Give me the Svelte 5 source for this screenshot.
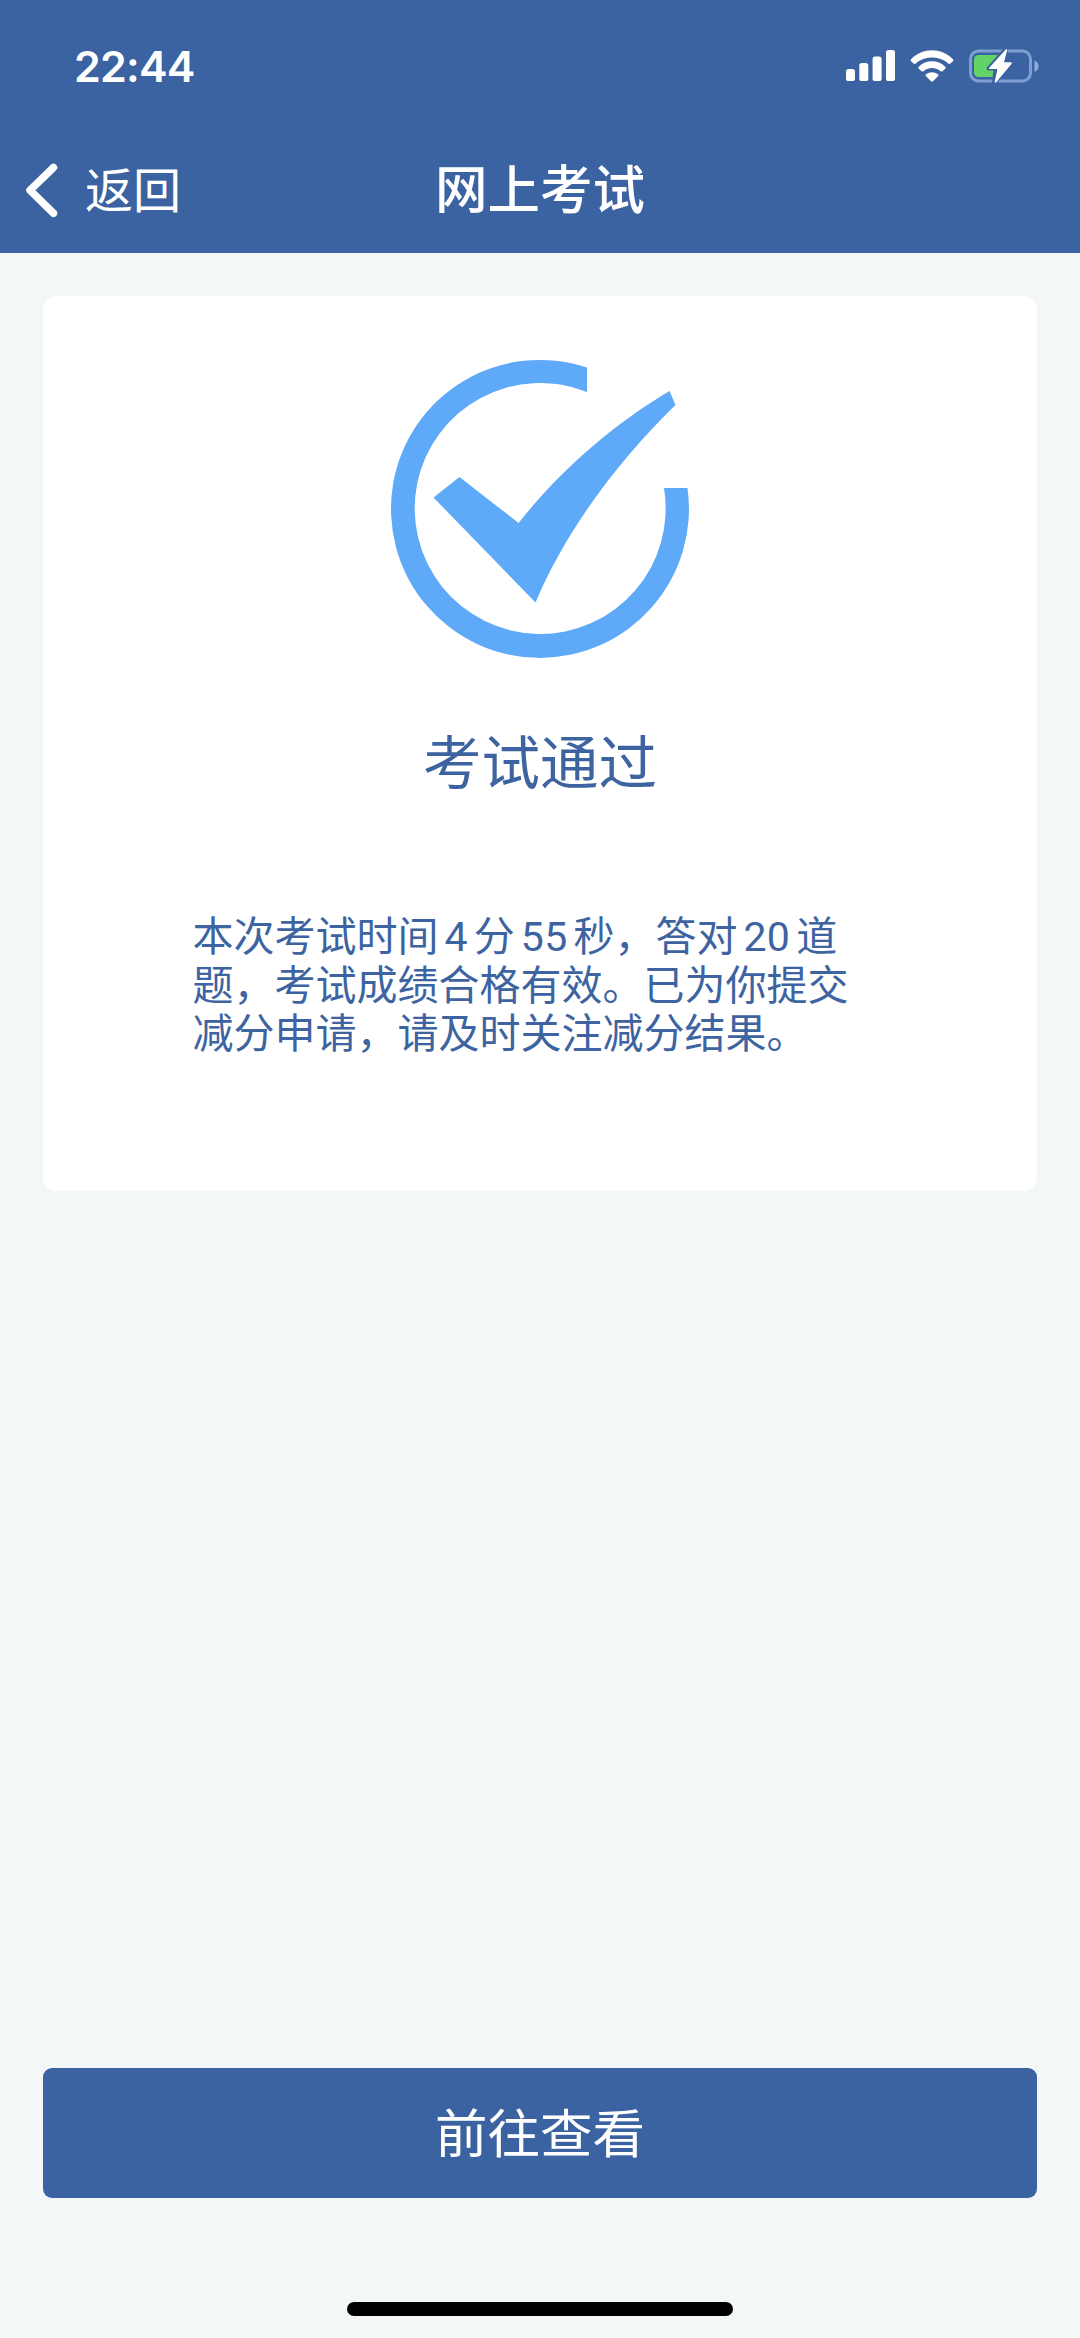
<script>
  const bars = [
    { x: 0, y: 19, h: 12 },
    { x: 13.3, y: 13, h: 18 },
    { x: 26.6, y: 6.5, h: 24.5 },
    { x: 40, y: 0, h: 31 }
  ];
  const resultLines = [
    ['本次考试时间', '4', '分', '55', '秒，答对', '20', '道'],
    ['题，考试成绩合格有效。已为你提交'],
    ['减分申请，请及时关注减分结果。']
  ];
  const isNumber = (part) => /^\d+$/.test(part);
</script>

<div class="screen">
  <header>
    <div class="status">
      <span class="time">22:44</span>
      <div class="indicators">
        <svg class="signal" width="50" height="32" viewBox="0 0 50 32">
          {#each bars as bar}
            <rect x={bar.x} y={bar.y} width="9" height={bar.h} rx="2.6" />
          {/each}
        </svg>
        <svg class="wifi" width="44" height="32" viewBox="0 0 44 32">
          <path d="M1.1 9.2Q.1 10.3 1.1 11.3L3.6 13.6Q4.6 14.5 5.7 13.5C14.8 5.6 29.2 5.6 38.3 13.5Q39.4 14.5 40.4 13.6L42.9 11.3Q43.9 10.3 42.9 9.2C31.2-2.7 12.8-2.7 1.1 9.2Z" />
          <path d="M8.7 16.7Q7.8 17.7 8.8 18.7L11.5 21.2Q12.5 22 13.5 21.2C18.5 17 25.5 17 30.5 21.2Q31.5 22 32.5 21.2L35.2 18.7Q36.2 17.7 35.3 16.7C27.8 9.4 16.2 9.4 8.7 16.7Z" />
          <path d="M16 24.3Q15.1 25.3 16.1 26.3L21 31.2Q22 32.1 23 31.2L27.9 26.3Q28.9 25.3 28 24.3C24.5 21.5 19.5 21.5 16 24.3Z" />
        </svg>
        <svg class="battery" width="70" height="36" viewBox="0 0 70 36">
          <rect x="1.5" y="3" width="60" height="30" rx="8" fill="none" stroke="#7f9fd2" stroke-width="3" />
          <path d="M65.5 12.5V24Q69.5 22 69.5 18.2T65.5 12.5Z" fill="#8fadda" />
          <rect x="5" y="7" width="27" height="22" rx="4.5" fill="#63d267" />
          <path d="M37 .8 19.5 20.5H26.5L25 35.2 43 14.5H34.5Z" fill="#fff" stroke="#3b63a1" stroke-width="4" stroke-linejoin="round" />
          <path d="M36.8 1.5 20 20Q19.5 21 21 21H28.5L25.7 33.8Q26 35.4 27.4 34L42.7 15.7Q43.3 14.3 41.7 14.3H35L38.2 2Q38 .3 36.8 1.5Z" fill="#fff" />
        </svg>
      </div>
    </div>
    <nav>
      <div class="back">
        <svg width="36" height="56" viewBox="0 0 36 56">
          <path d="M29.5 5.5 6 28.3 29.5 51.3" fill="none" stroke="#fff" stroke-width="7.5" stroke-linecap="round" stroke-linejoin="round" />
        </svg>
        <span>返回</span>
      </div>
      <h1>网上考试</h1>
    </nav>
  </header>

  <main>
    <section class="card">
      <svg class="emblem" width="300" height="300" viewBox="0 0 300 300">
        <path d="M197 8.5A149 149 0 1 0 297.500 129H274A125.500 125.500 0 1 1 197 33Z" />
        <path d="M43.500 138.500 69.500 118 128.500 164C170 112 222 66 279.500 32L285.500 46C230 100 177 169 145.500 243.500Z" />
      </svg>
      <h2>考试通过</h2>
      <div class="message">
        {#each resultLines as line}
          <p>
            {#each line as part}<span class:number={isNumber(part)}>{part}</span>{/each}
          </p>
        {/each}
      </div>
    </section>
    <button>前往查看</button>
  </main>
  <div class="home"></div>
</div>

<style>
  :global(body) { margin: 0; }
  .screen {
    box-sizing: border-box;
    width: 1080px;
    height: 2338px;
    display: flex;
    flex-direction: column;
    align-items: center;
    padding-bottom: 22px;
    background: #f3f7f8;
    font-family: Inter, "Noto Sans CJK SC", sans-serif;
    overflow: hidden;
  }
  header {
    width: 100%;
    height: 253px;
    background: #3b63a1;
    color: #fff;
  }
  .status {
    box-sizing: border-box;
    height: 126px;
    padding: 6px 41px 0 74px;
    display: flex;
    align-items: center;
    justify-content: space-between;
  }
  .time {
    font-size: 43px;
    font-weight: 600;
    letter-spacing: -0.8px;
  }
  .indicators { display: flex; align-items: center; }
  .indicators svg { display: block; }
  .signal, .wifi { fill: #fff; }
  .wifi { margin-left: 14px; }
  .battery { margin-left: 15px; }
  nav {
    height: 127px;
    display: grid;
    grid-template-columns: 1fr auto 1fr;
    align-items: center;
    box-sizing: border-box;
    padding: 1px 24px 0;
  }
  .back { display: flex; align-items: center; font-size: 48px; font-weight: 400; }
  .back svg { margin-right: 25px; }
  .back span { padding-top: 2px; line-height: 60px; }
  h1 {
    margin: 0;
    font-size: 52.5px;
    line-height: 60px;
    font-weight: 500;
  }
  main {
    box-sizing: border-box;
    width: 994px;
    flex: 1;
    display: flex;
    flex-direction: column;
    justify-content: space-between;
    padding: 43px 0 104px;
  }
  .card {
    box-sizing: border-box;
    height: 895px;
    padding-top: 63px;
    display: flex;
    flex-direction: column;
    align-items: center;
    background: #fff;
    border-radius: 14px;
    color: #3d64a0;
  }
  .emblem { display: block; fill: #5ea9f8; }
  h2 {
    margin: 66px 0 0;
    font-size: 58.5px;
    line-height: 76px;
    font-weight: 400;
  }
  .message {
    width: 695px;
    margin-top: 111px;
    font-size: 41px;
    line-height: 48px;
  }
  p { margin: 0; white-space: nowrap; }
  .number {
    margin: 0 6px;
    font-family: Roboto, sans-serif;
    letter-spacing: 0.3px;
  }
  button {
    height: 130px;
    padding: 0 6px 7px;
    border: 0;
    border-radius: 9px;
    background: #3b63a1;
    color: #fff;
    font: 400 52.5px "Noto Sans CJK SC", sans-serif;
  }
  .home {
    width: 386px;
    height: 14px;
    border-radius: 7px;
    background: #000;
  }
</style>
